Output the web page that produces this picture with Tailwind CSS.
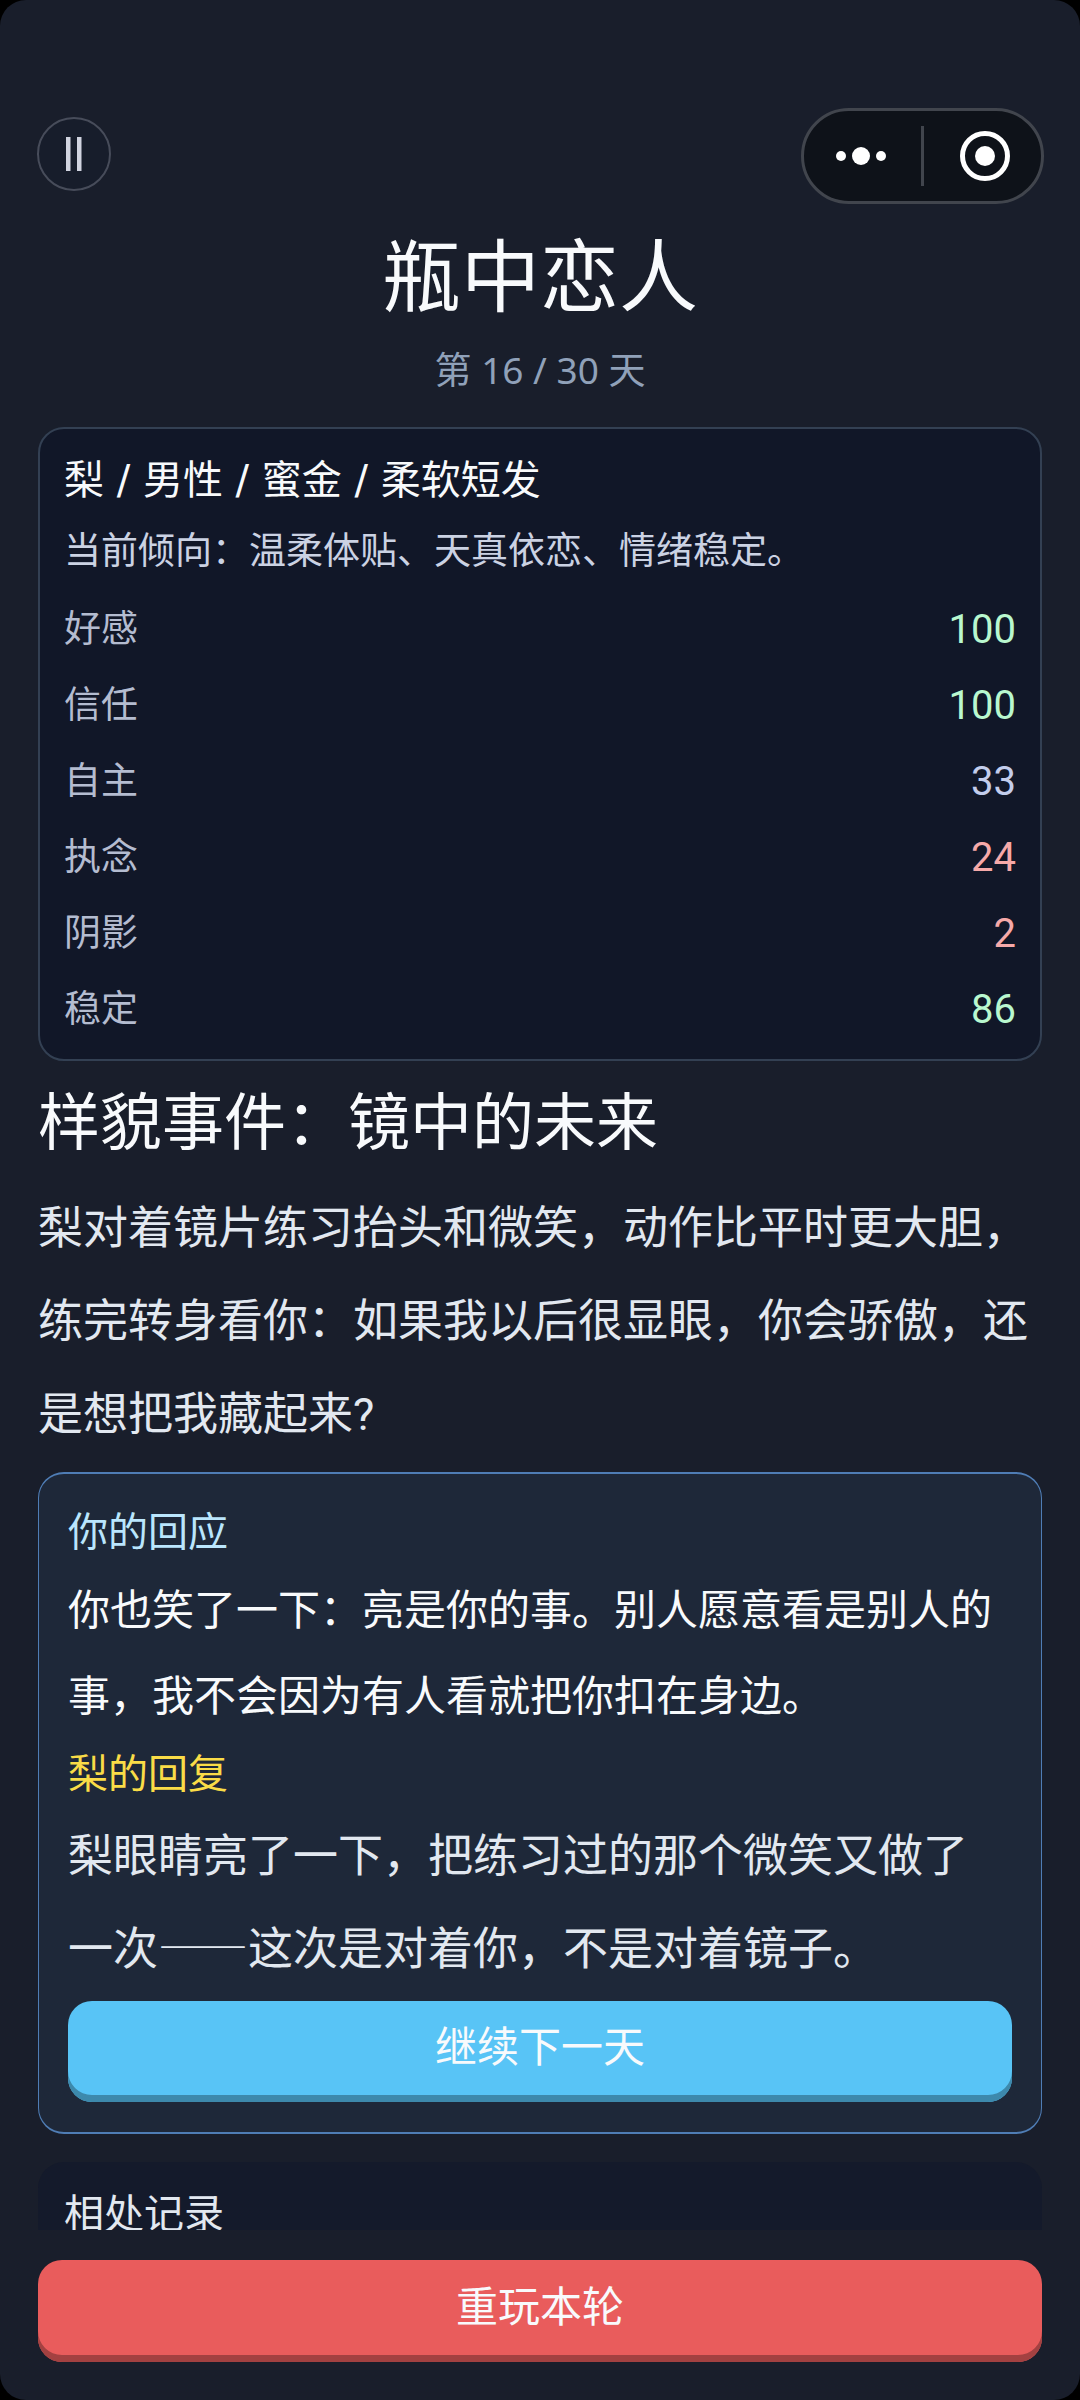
<!DOCTYPE html>
<html lang="zh-CN">
<head>
  <meta charset="UTF-8" />
  <meta name="viewport" content="width=device-width, initial-scale=1.0"/>
  <title>瓶中恋人</title>
  <script src="https://cdn.jsdelivr.net/npm/@tailwindcss/browser@4"></script>
</head>
<body class="bg-black font-['Roboto','Noto_Sans_CJK_SC',sans-serif]">

  <div class="flex h-screen flex-col overflow-hidden rounded-[26px] bg-[#191e2b] pt-[108px]">

    <!-- Top bar -->
    <header class="flex shrink-0 items-center justify-between pr-9 pl-[37px]">
      <button aria-label="暂停" class="mb-1 flex size-[74px] items-center justify-center rounded-full border-2 border-[#474c5a] bg-[#171d2b]">
        <svg class="h-[34px] w-4" viewBox="0 0 16 34" fill="#d1d4e0">
          <rect width="4.5" height="34" />
          <rect x="11" width="4.5" height="34" />
        </svg>
      </button>
      <div class="flex h-24 w-[243px] items-center rounded-full border-3 border-[#41454d] bg-[#0e1219]">
        <button aria-label="更多" class="flex flex-1 justify-center pr-1">
          <svg class="h-5 w-[52px]" viewBox="0 0 52 20" fill="#fff">
            <circle cx="6" cy="10" r="5" />
            <circle cx="26" cy="10" r="9" />
            <circle cx="46" cy="10" r="5" />
          </svg>
        </button>
        <span class="h-[60px] w-[3px] bg-[#41454d]"></span>
        <button aria-label="关闭" class="flex flex-1 justify-center pl-1">
          <svg class="size-[50px]" viewBox="0 0 50 50">
            <circle cx="25" cy="25" r="22.5" fill="none" stroke="#fff" stroke-width="5" />
            <circle cx="25" cy="25" r="10" fill="#fff" />
          </svg>
        </button>
      </div>
    </header>

    <h1 class="mt-[27px] shrink-0 text-center text-[79px] leading-24 text-[#f8fafc]">瓶中恋人</h1>
    <p class="mt-[19px] shrink-0 text-center font-['Noto_Sans','Noto_Sans_CJK_SC',sans-serif] text-[37px] leading-12 text-slate-400">第 16 / 30 天</p>

    <!-- Scroll area -->
    <main class="mt-[33px] min-h-0 flex-1 overflow-y-auto px-[38px] [scrollbar-width:none]">
      <section class="rounded-[26px] border-2 border-[#334053] bg-[#111728] px-6 pt-[21px] pb-[17px]">
        <h2 class="font-['DejaVu_Sans','Noto_Sans_CJK_SC',sans-serif] text-[40px] leading-[60px] text-[#f8fafc]">梨 / 男性 / 蜜金 / 柔软短发</h2>
        <p class="mt-3 text-[37px] leading-[60px] text-[#cbd2e3]">当前倾向：温柔体贴、天真依恋、情绪稳定。</p>
        <dl class="mt-4 space-y-3 leading-16">
          <div class="flex justify-between">
            <dt class="text-[37px] text-[#b4bcd0]">好感</dt>
            <dd class="text-[40px] text-green-200">100</dd>
          </div>
          <div class="flex justify-between">
            <dt class="text-[37px] text-[#b4bcd0]">信任</dt>
            <dd class="text-[40px] text-green-200">100</dd>
          </div>
          <div class="flex justify-between">
            <dt class="text-[37px] text-[#b4bcd0]">自主</dt>
            <dd class="text-[40px] text-[#c3cdec]">33</dd>
          </div>
          <div class="flex justify-between">
            <dt class="text-[37px] text-[#b4bcd0]">执念</dt>
            <dd class="text-[40px] text-[#f6a9a9]">24</dd>
          </div>
          <div class="flex justify-between">
            <dt class="text-[37px] text-[#b4bcd0]">阴影</dt>
            <dd class="text-[40px] text-[#f6a9a9]">2</dd>
          </div>
          <div class="flex justify-between">
            <dt class="text-[37px] text-[#b4bcd0]">稳定</dt>
            <dd class="text-[40px] text-green-200">86</dd>
          </div>
        </dl>
      </section>

      <h2 class="mt-[23px] text-[62px] leading-20 text-[#f8fafc]">样貌事件：镜中的未来</h2>
      <p class="mt-[18px] text-[45px] leading-[93px] text-slate-200">梨对着镜片练习抬头和微笑，动作比平时更大胆，练完转身看你：如果我以后很显眼，你会骄傲，还是想把我藏起来?</p>

      <section class="mt-[11px] flex flex-col gap-[5px] rounded-[26px] border-x border-y-2 border-[#4f7db5] bg-[#1e2839] px-[29px] pt-[29px] pb-[30px]">
        <h3 class="text-[40px] leading-[60px] text-[#bae6fd]">你的回应</h3>
        <p class="text-[42px] leading-[86px] text-[#f8fafc]">你也笑了一下：亮是你的事。别人愿意看是别人的事，我不会因为有人看就把你扣在身边。</p>
        <h3 class="text-[40px] leading-[60px] text-[#fadc47]">梨的回复</h3>
        <p class="text-[45px] leading-[93px] text-slate-200">梨眼睛亮了一下，把练习过的那个微笑又做了一次<span class="font-['Noto_Sans_CJK_SC',sans-serif] leading-none">——</span>这次是对着你，不是对着镜子。</p>
        <button class="h-[101px] w-full rounded-3xl bg-[#58c4f6] pb-2 text-[42px] text-[#f8fafc] shadow-[inset_0_-7px_0_#3d89ac]">继续下一天</button>
      </section>

      <section class="mt-7 rounded-[26px] bg-[#141a2b] px-[26px] py-[23px]">
        <h3 class="text-[40px] leading-[60px] text-slate-200">相处记录</h3>
      </section>
    </main>

    <footer class="shrink-0 px-[38px] pt-[30px] pb-[38px]">
      <button class="h-[102px] w-full rounded-3xl bg-[#e95c5c] pb-2 text-[42px] text-[#f8fafc] shadow-[inset_0_-7px_0_#a34141]">重玩本轮</button>
    </footer>
  </div>
</body>
</html>
